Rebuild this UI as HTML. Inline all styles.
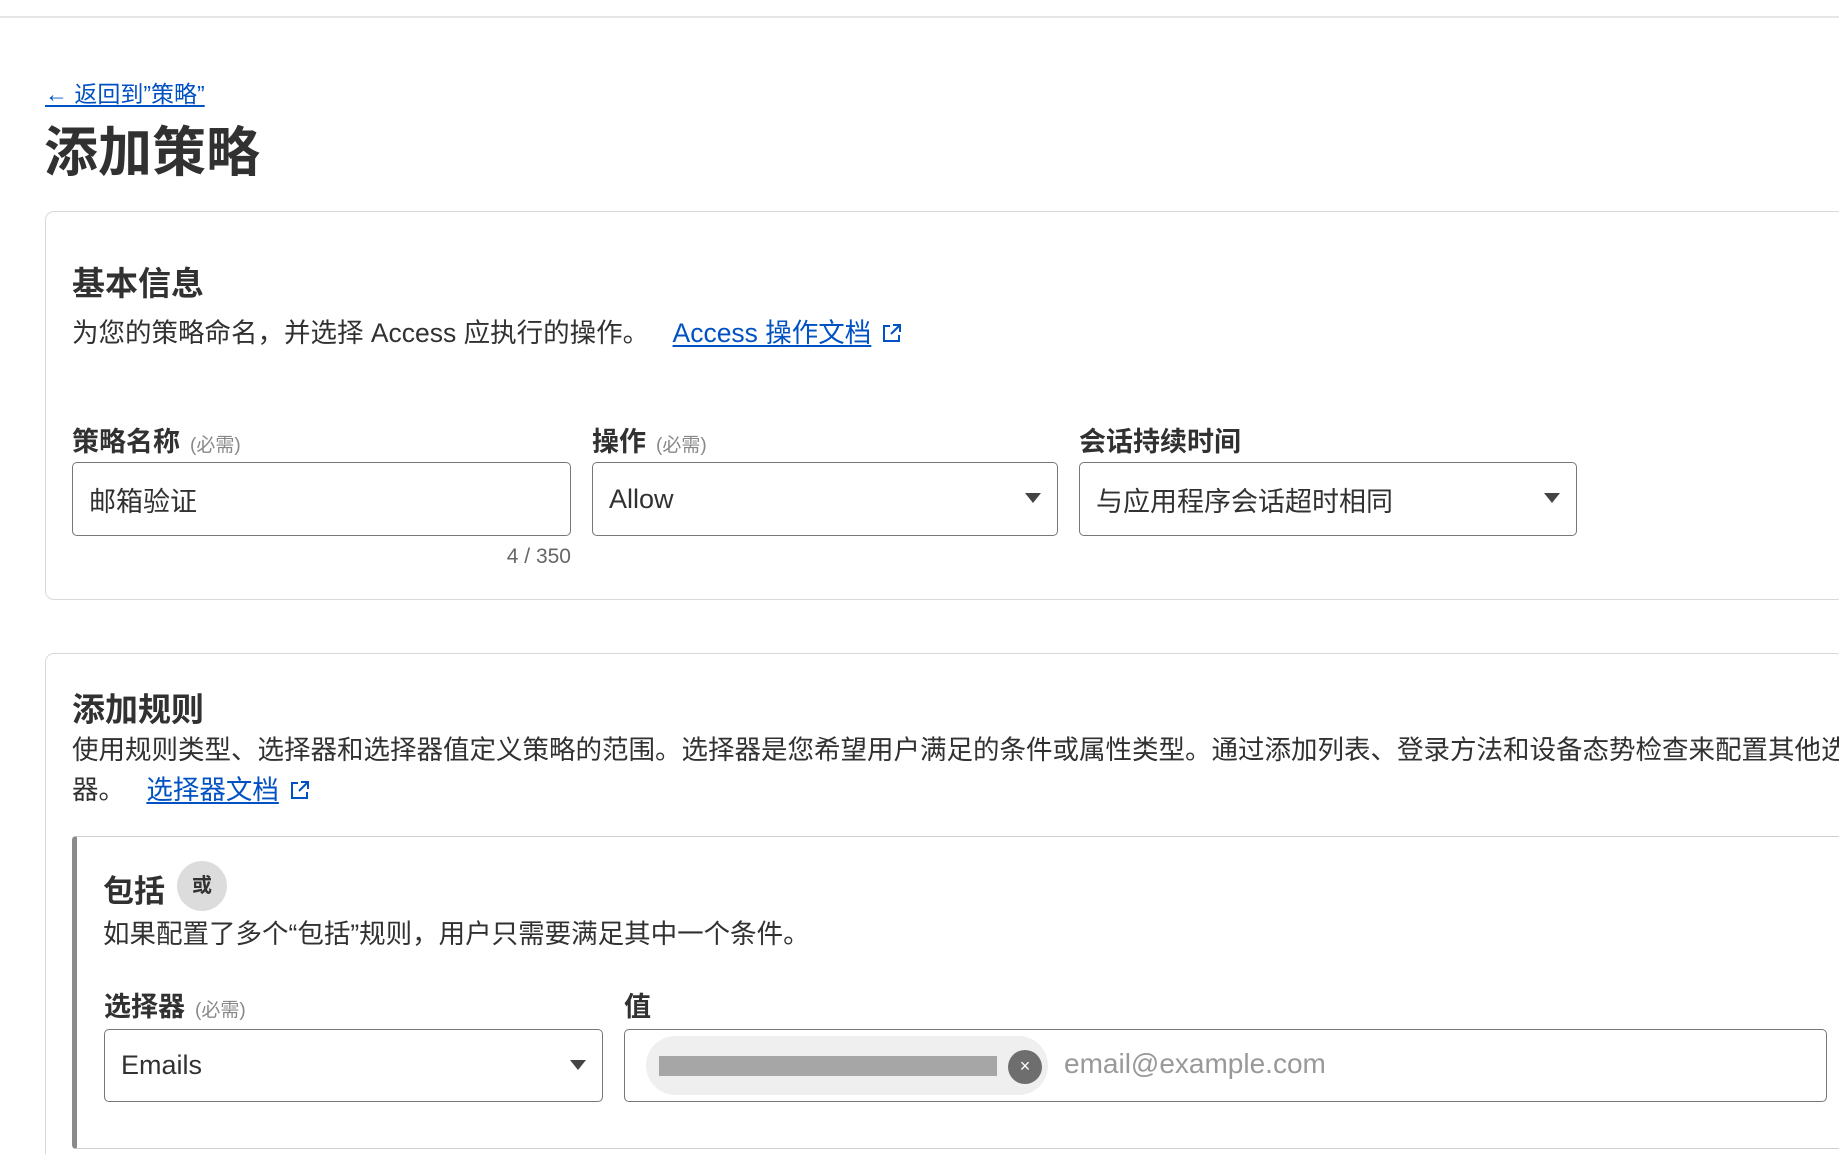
<!DOCTYPE html>
<html style="overflow:hidden;height:1154px"><head><meta charset="utf-8"><style>
*{box-sizing:border-box;margin:0;padding:0}
body{width:1839px;height:1154px;overflow:hidden;background:#fff;font-family:"Liberation Sans","Noto Sans CJK SC",sans-serif;color:#313131}
#w{position:relative;width:1839px;height:1154px;overflow:hidden}
.a{position:absolute;white-space:nowrap}
.lk{color:#0051c3;text-decoration:underline;text-underline-offset:3px}
.card{position:absolute;border:1px solid #d9d9d9;border-radius:9px;border-right:none}
.lbl{font-size:27px;font-weight:bold;color:#313131}
.req{font-size:19px;font-weight:normal;color:#888;margin-left:10px}
.inp{position:absolute;border:1px solid #777;border-radius:5px;background:#fff;font-size:27px;color:#313131;display:flex;align-items:center;padding-left:16px}
.tri{position:absolute;right:16px;top:30px;width:0;height:0;border-left:8px solid transparent;border-right:8px solid transparent;border-top:10px solid #444}
</style></head><body><div id="w">
<div class="a" style="left:0;top:16px;width:1839px;height:2px;background:#e6e6e6"></div>
<div class="a lk" style="left:45px;top:75px;font-size:23px">← 返回到”策略”</div>
<div class="a" style="left:44px;top:120px;font-size:54px;font-weight:bold;color:#313131;line-height:66px">添加策略</div>

<div class="card" style="left:45px;top:211px;width:1800px;height:389px"></div>
<div class="a" style="left:72px;top:257px;font-size:33px;font-weight:bold">基本信息</div>
<div class="a" style="left:72px;top:311px;font-size:26.5px">为您的策略命名，并选择 Access 应执行的操作。 <span class="lk" style="margin-left:16px;color:#0051c3">Access 操作文档</span><svg width="22" height="22" viewBox="0 0 22 22" style="margin-left:10px;vertical-align:-2px"><path d="M9 4H3v15h15v-6M12 3h7v7M19 3l-9 9" fill="none" stroke="#0051c3" stroke-width="2"/></svg></div>

<div class="a lbl" style="left:72px;top:420px">策略名称<span class="req">(必需)</span></div>
<div class="a lbl" style="left:592px;top:420px">操作<span class="req">(必需)</span></div>
<div class="a lbl" style="left:1079px;top:420px">会话持续时间</div>

<div class="inp" style="left:72px;top:462px;width:499px;height:74px">邮箱验证</div>
<div class="inp" style="left:592px;top:462px;width:466px;height:74px">Allow<div class="tri"></div></div>
<div class="inp" style="left:1079px;top:462px;width:498px;height:74px">与应用程序会话超时相同<div class="tri"></div></div>
<div class="a" style="left:470px;top:545px;width:101px;text-align:right;font-size:21px;color:#666">4 / 350</div>

<div class="card" style="left:45px;top:653px;width:1800px;height:520px"></div>
<div class="a" style="left:72px;top:683px;font-size:33px;font-weight:bold">添加规则</div>
<div class="a" style="left:72px;top:730px;font-size:26.5px;line-height:40px">使用规则类型、选择器和选择器值定义策略的范围。选择器是您希望用户满足的条件或属性类型。通过添加列表、登录方法和设备态势检查来配置其他选择<br>器。 <span class="lk" style="margin-left:14px">选择器文档</span><svg width="22" height="22" viewBox="0 0 22 22" style="margin-left:10px;vertical-align:-2px"><path d="M9 4H3v15h15v-6M12 3h7v7M19 3l-9 9" fill="none" stroke="#0051c3" stroke-width="2"/></svg></div>

<div class="a" style="left:72px;top:836px;width:1800px;height:313px;border:1px solid #d0d0d0;border-left:5px solid #8a8a8a;border-right:none;border-radius:4px 0 0 4px"></div>
<div class="a" style="left:103px;top:866px;font-size:31px;font-weight:bold">包括</div>
<div class="a" style="left:177px;top:861px;width:50px;height:50px;border-radius:50%;background:#dcdcdc;font-size:20px;font-weight:bold;text-align:center;line-height:50px;color:#333">或</div>
<div class="a" style="left:103px;top:912px;font-size:26.5px">如果配置了多个“包括”规则，用户只需要满足其中一个条件。</div>

<div class="a lbl" style="left:104px;top:985px">选择器<span class="req">(必需)</span></div>
<div class="a lbl" style="left:624px;top:985px">值</div>
<div class="inp" style="left:104px;top:1029px;width:499px;height:73px">Emails<div class="tri"></div></div>
<div class="inp" style="left:624px;top:1029px;width:1203px;height:73px;padding-left:0">
  <div class="a" style="left:21px;top:6px;width:402px;height:59px;border-radius:30px;background:#efefef"></div>
  <div class="a" style="left:34px;top:26px;width:338px;height:20px;background:#a6a6a6"></div>
  <div class="a" style="left:383px;top:20px;width:34px;height:34px;border-radius:50%;background:#6e6e6e;color:#fff;font-size:18px;text-align:center;line-height:33px">×</div>
  <div class="a" style="left:439px;top:18px;font-size:28px;color:#999">email@example.com</div>
</div>
</div></body></html>
